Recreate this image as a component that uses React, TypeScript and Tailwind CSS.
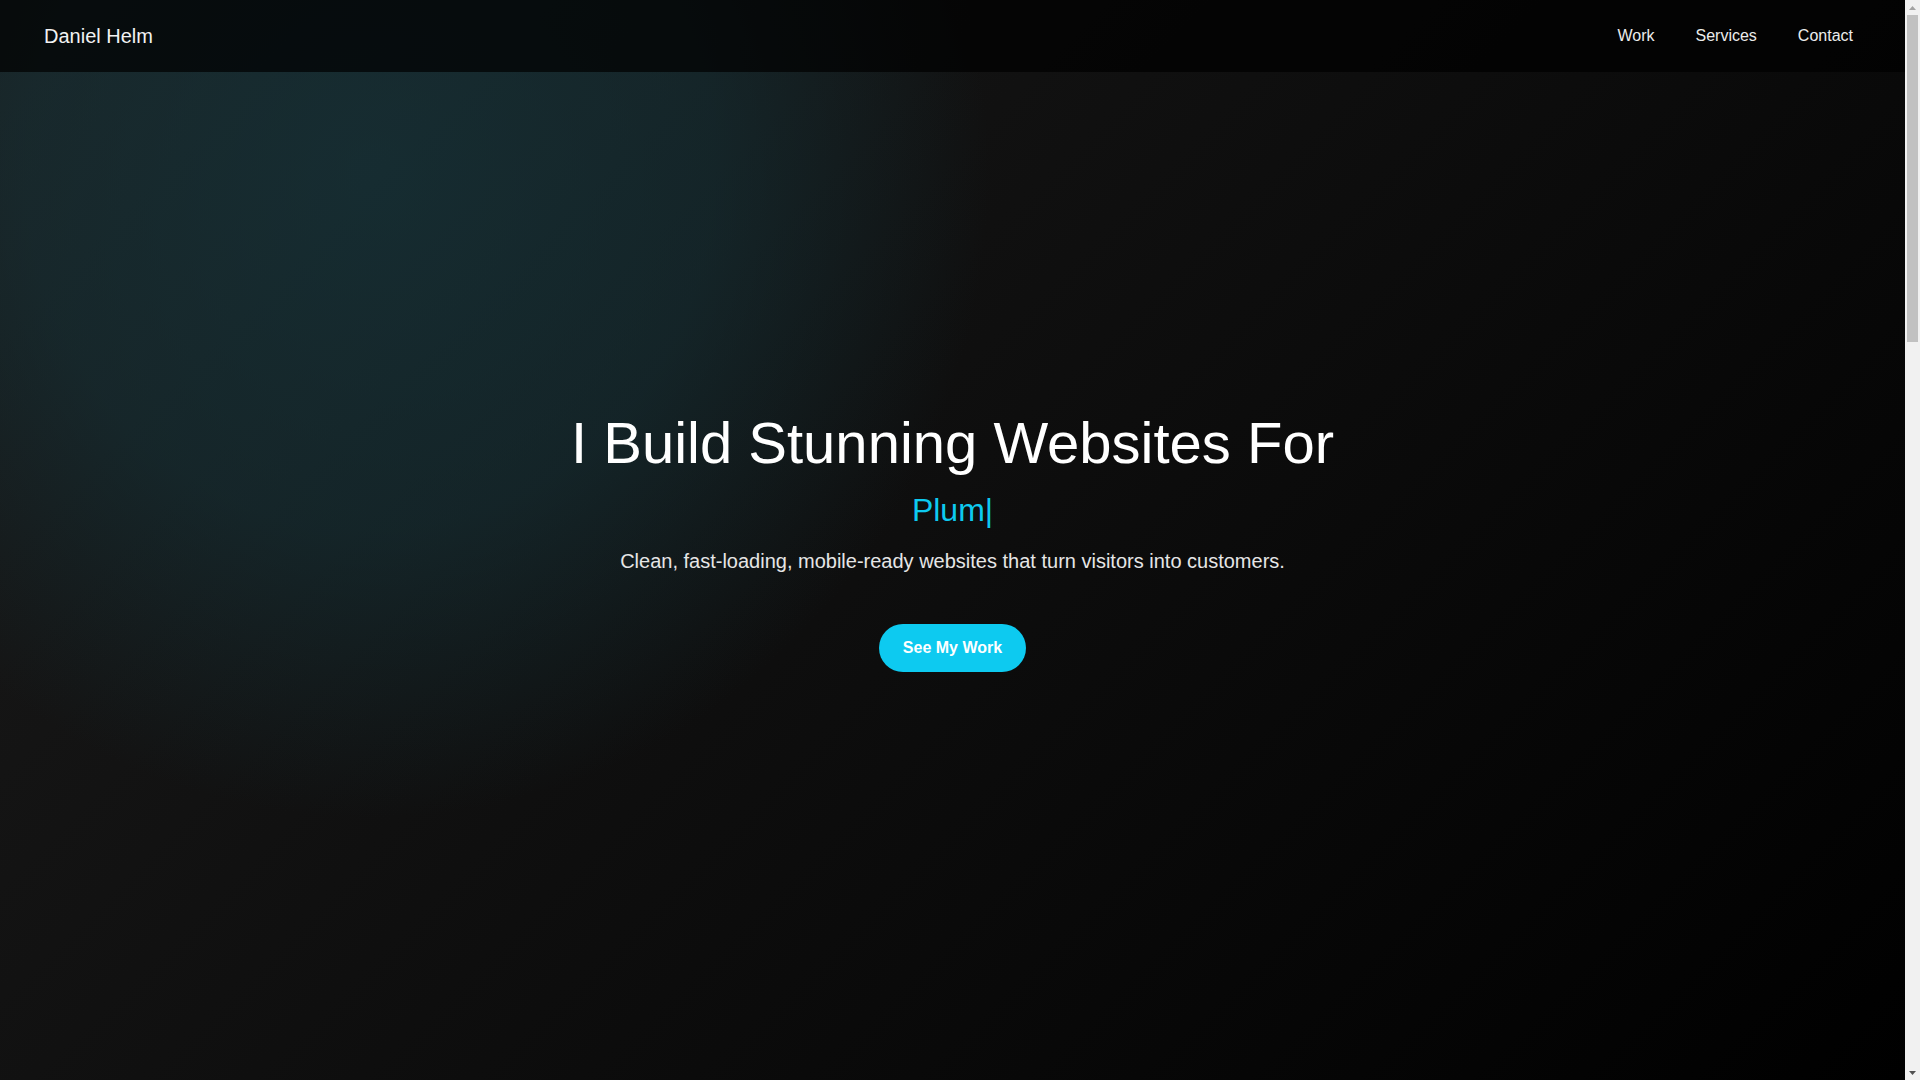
import React from "react";

const navLinks = [
  { label: "Work", href: "#work" },
  { label: "Services", href: "#services" },
  { label: "Contact", href: "#contact" },
];

const Navbar = () => (
  <header className="sticky top-0 z-10 flex h-[72px] items-center justify-between bg-black/70 pr-[52px] pl-[44px]">
    <a href="#" className="text-[20px] text-[#f2f2f2]">
      Daniel Helm
    </a>
    <nav className="flex items-center gap-[41px]">
      {navLinks.map((link) => (
        <a key={link.label} href={link.href} className="text-[16px] text-[#ececec]">
          {link.label}
        </a>
      ))}
    </nav>
  </header>
);

const Hero = () => (
  <section className="-mt-[72px] flex h-screen flex-col items-center justify-center bg-[radial-gradient(ellipse_860px_900px_at_370px_170px,rgba(22,58,66,0.62)_0%,rgba(22,58,66,0.45)_40%,rgba(22,58,66,0)_72%),linear-gradient(135deg,#1b1b1b_0%,#000_100%)] text-center">
    <h1 className="mb-[14px] text-[58px] leading-[1.2] font-normal text-white">
      I Build Stunning Websites For
    </h1>
    <p className="mb-[17px] text-[32px] leading-[1.2] text-[#0dcaf0]">Plum|</p>
    <p className="mb-[48px] text-[20px] leading-[1.5] text-[#e6e6e6]">
      Clean, fast-loading, mobile-ready websites that turn visitors into customers.
    </p>
    <a
      href="#work"
      className="flex h-12 items-center rounded-full bg-[#0dcaf0] px-6 text-[16px] font-bold text-white"
    >
      See My Work
    </a>
  </section>
);

const Scrollbar = () => (
  <div className="flex h-screen w-[15px] shrink-0 flex-col bg-[#f1f1f1]">
    <div className="flex h-[15px] items-center justify-center">
      <svg width="7" height="4" viewBox="0 0 7 4" aria-hidden="true">
        <path d="M3.5 0L7 4H0z" fill="#a3a3a3" />
      </svg>
    </div>
    <div className="flex flex-1 flex-col px-[2px]">
      <div className="h-[327px] bg-[#c1c1c1]" />
    </div>
    <div className="flex h-[15px] items-center justify-center">
      <svg width="7" height="4" viewBox="0 0 7 4" aria-hidden="true">
        <path d="M0 0H7L3.5 4z" fill="#505050" />
      </svg>
    </div>
  </div>
);

export default function App() {
  return (
    <div className="flex h-screen overflow-hidden bg-[#0a0a0a] font-['Liberation_Sans',Arial,sans-serif] text-white">
      <main className="h-screen flex-1 overflow-hidden">
        <Navbar />
        <Hero />
      </main>
      <Scrollbar />
    </div>
  );
}
